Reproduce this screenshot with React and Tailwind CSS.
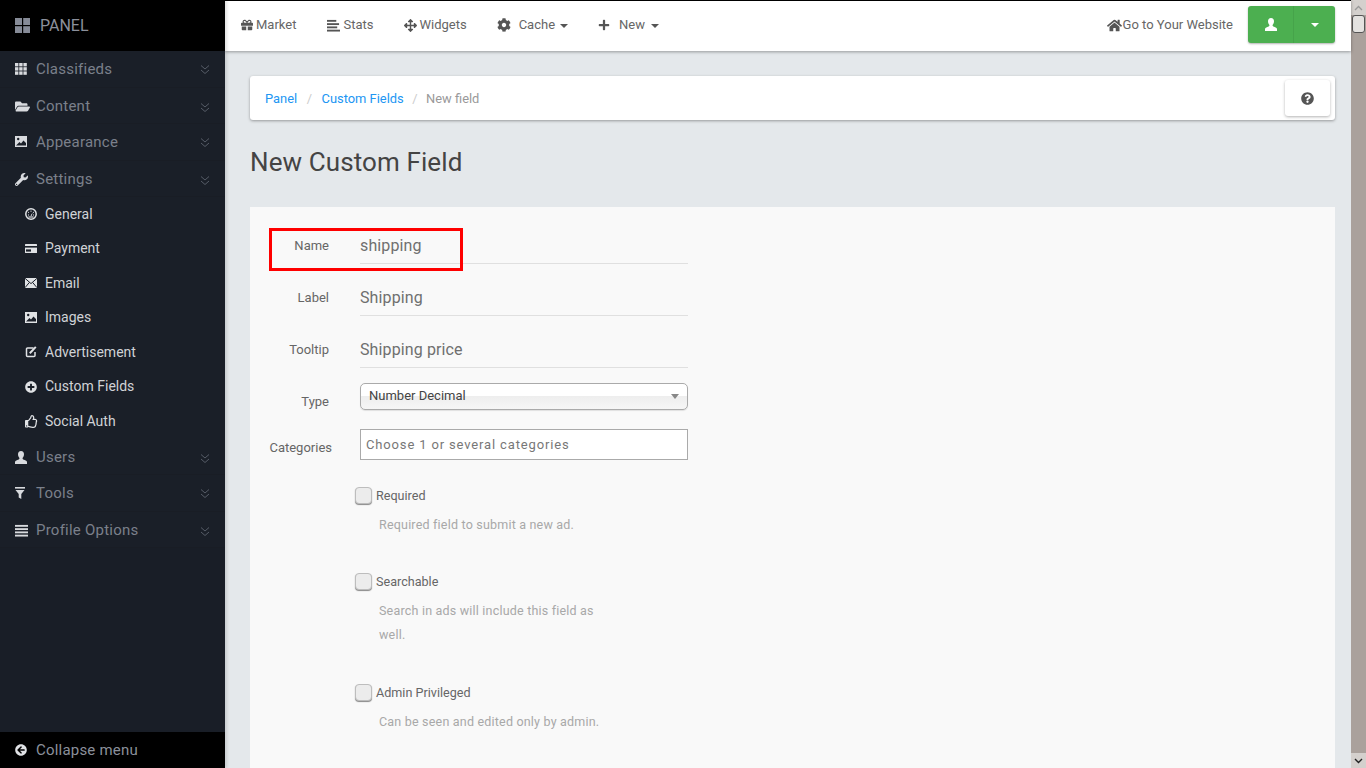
import React from "react";
import {
  FaFolderOpen, FaWrench, FaPlusCircle, FaRegThumbsUp, FaArrowCircleLeft, FaGift, FaArrowsAlt,
  FaCog, FaPlus, FaHome, FaQuestionCircle,
} from "react-icons/fa";

const Chevrons = () => (
  <svg width="10" height="11" viewBox="0 0 10 11" fill="none" stroke="#565c67" strokeWidth="1" className="shrink-0 mt-[2px]">
    <path d="M1 1.5 5 5l4-3.5M1 6l4 3.5L9 6" />
  </svg>
);

const Lines = ({ size = 14, color = "currentColor", left = false }) => (
  <svg width={size} height={size} viewBox="0 0 14 14" fill={color} className="shrink-0">
    <rect x="0" y="1" width={left ? 10 : 14} height="2" />
    <rect x="0" y="4.5" width={left ? 13 : 14} height="2" />
    <rect x="0" y="8" width={left ? 11 : 14} height="2" />
    <rect x="0" y="11.5" width="14" height="2" />
  </svg>
);

const ThIcon = () => (
  <svg width="12" height="12" viewBox="0 0 12 12" fill="currentColor">
    {[0, 4.2, 8.4].flatMap((x) => [0, 4.2, 8.4].map((y) => <rect key={`${x}-${y}`} x={x} y={y} width="3.4" height="3.4" />))}
  </svg>
);
const ThLarge = () => (
  <svg width="15" height="15" viewBox="0 0 15 15" fill="#868b97" className="mr-[10px]">
    <rect width="7" height="7" /><rect x="8.2" width="6.8" height="7" /><rect y="8.2" width="7" height="6.8" /><rect x="8.2" y="8.2" width="6.8" height="6.8" />
  </svg>
);
const ImageIcon = () => (
  <svg width="12" height="11" viewBox="0 0 12 11">
    <rect width="12" height="11" fill="currentColor" />
    <path d="M1 9.5 4.5 6l1.5 1.5L8.5 4.5 11 7v2.5z" fill="#1a1f28" />
    <circle cx="3.2" cy="3" r="1.2" fill="#1a1f28" />
  </svg>
);
const Gauge = () => (
  <svg width="12" height="12" viewBox="0 0 12 12">
    <circle cx="6" cy="6" r="5.2" fill="#1a1f28" stroke="currentColor" strokeWidth="1.5" />
    <path d="M6 2.6v1.2M3 4l.9.7M9 4l-.9.7M3 7h1M8 7h1" stroke="currentColor" strokeWidth="1" />
    <path d="M5.5 7.5 7.7 4.4 6.7 8z" fill="currentColor" />
    <path d="M3.5 9h5" stroke="currentColor" strokeWidth="1.2" />
  </svg>
);
const Card = () => (
  <svg width="12" height="9" viewBox="0 0 12 9">
    <rect width="12" height="9" rx="0.5" fill="currentColor" />
    <rect y="2" width="12" height="1.6" fill="#1a1f28" />
    <rect x="1" y="5.4" width="5" height="2.2" fill="#1a1f28" />
  </svg>
);
const Mail = () => (
  <svg width="12" height="10" viewBox="0 0 12 10">
    <rect width="12" height="10" fill="currentColor" />
    <path d="M0 .3 6 5.6 12 .3M0 9.700l4.300-5.200M12 9.700 7.700 4.500" fill="none" stroke="#1a1f28" strokeWidth="1" />
  </svg>
);
const Edit = () => (
  <svg width="12" height="12" viewBox="0 0 12 12" fill="none" stroke="currentColor">
    <path d="M8.5 2H2.5a1 1 0 0 0-1 1v6.500a1 1 0 0 0 1 1H9a1 1 0 0 0 1-1V6" strokeWidth="1.5" />
    <path d="M4.800 7.200 10.800.9" strokeWidth="2" />
  </svg>
);
const Person = () => (
  <svg width="12" height="13" viewBox="0 0 12 13" fill="currentColor">
    <path d="M6 0c2 0 3 1.400 3 3.300C9 5 8.200 6.300 7.600 7c-.2.700.2 1.300 1.400 1.800 1.600.6 3 1 3 2.400V13H0v-1.800c0-1.400 1.400-1.800 3-2.400C4.200 8.300 4.600 7.700 4.400 7 3.800 6.300 3 5 3 3.300 3 1.400 4 0 6 0z" />
  </svg>
);
const Filter = () => (
  <svg width="10" height="12" viewBox="0 0 10 12" fill="currentColor">
    <rect width="10" height="1.600" />
    <path d="M.5 3H9.500L6.300 7v5L3.700 10.500V7z" />
  </svg>
);

const Section = ({ icon, label, nudge = "" }) => (
  <div className={`flex items-center h-[36.5px] ${nudge} pl-[15px] pr-[15px] text-[#7b808b] text-[15px] tracking-[0.23px] border-b border-[#191d25]`}>
    <span className="w-[21px] shrink-0 text-[#d8dade] flex items-center">{icon}</span>
    <span className="flex-1">{label}</span>
    <Chevrons />
  </div>
);

const Sub = ({ icon, label }) => (
  <div className="flex items-center h-[34.5px] pl-[25px] text-[#d0d2d6] text-[14px]">
    <span className="w-[20px] shrink-0 text-[#e0e2e5] flex items-center">{icon}</span>
    <span>{label}</span>
  </div>
);

const Caret = ({ className = "border-t-[#555]" }) => (
  <span className={`w-0 h-0 border-x-[4px] border-x-transparent border-t-[4px] ${className}`} />
);

const NavItem = ({ icon, label, caret, gap = "gap-[3px]", className = "" }) => (
  <div className={`flex items-center ${gap} text-[13px] text-[#666] ${className}`}>
    <span className="text-[#555] flex items-center">{icon}</span>
    <span>{label}</span>
    {caret && <span className="-ml-[3px] mt-[1px] flex"><Caret /></span>}
  </div>
);

const Field = ({ label, value }) => (
  <div className="flex h-[52px]">
    <div className="w-[79px] text-right text-[13px] text-[#666] pt-[8px] leading-[20px]">{label}</div>
    <div className="ml-[31px] w-[328px] h-[36px] border-b border-[#e0e0e0] text-[16px] text-[#6f6f6f] leading-[20px] pt-[8px] tracking-[0.12px]">{value}</div>
  </div>
);

const Check = ({ label, hint, className = "" }) => (
  <div className={`flex flex-col ${className}`}>
    <div className="flex items-center ml-[105px] h-[17px]">
      <span className="w-[17px] h-[17px] rounded-[4px] border border-[#bdbdbd] bg-[#ececec] shadow-[0_1px_1px_rgba(0,0,0,0.45)]" />
      <span className="ml-[4px] pt-[2px] text-[12.6px] text-[#666]">{label}</span>
    </div>
    <p className="ml-[129px] mt-[9px] w-[226px] text-[12.5px] leading-[24px] text-[#a8a8a8] tracking-[0.2px]">{hint}</p>
  </div>
);

export default function App() {
  return (
    <div className="flex h-screen w-screen overflow-hidden font-['Roboto',sans-serif] bg-[#e4e8eb]">
      <aside className="w-[225px] shrink-0 h-full flex flex-col bg-[#1a1f28] shadow-[2px_0_3px_rgba(0,0,0,0.12)] z-10">
        <div className="h-[51px] bg-black flex items-center pl-[15px] text-[#8b909b] text-[16px] shrink-0">
          <ThLarge />
          <span>PANEL</span>
        </div>
        <Section icon={<ThIcon />} label="Classifieds" />
        <Section icon={<FaFolderOpen size={15} />} label="Content" nudge="pt-[2px]" />
        <Section icon={<ImageIcon />} label="Appearance" />
        <Section icon={<FaWrench size={13} />} label="Settings" nudge="pt-[2px]" />
        <Sub icon={<Gauge />} label="General" />
        <Sub icon={<Card />} label="Payment" />
        <Sub icon={<Mail />} label="Email" />
        <Sub icon={<ImageIcon />} label="Images" />
        <Sub icon={<Edit />} label="Advertisement" />
        <Sub icon={<FaPlusCircle size={12} />} label="Custom Fields" />
        <Sub icon={<FaRegThumbsUp size={13} />} label="Social Auth" />
        <Section icon={<Person />} label="Users" nudge="pt-[2px]" />
        <Section icon={<Filter />} label="Tools" />
        <Section icon={<Lines size={13} />} label="Profile Options" nudge="pt-[2px]" />
        <div className="flex-1 bg-[#191e27]" />
        <div className="h-[36px] bg-black flex items-center pl-[15px] text-[#8b909b] text-[15px] tracking-[0.2px] shrink-0">
          <FaArrowCircleLeft size={12} className="text-[#e0e2e5] mr-[9px]" />
          <span>Collapse menu</span>
        </div>
      </aside>

      <div className="flex-1 min-w-0 h-full flex flex-col">
        <header className="h-[51px] shrink-0 bg-white border-t border-black flex items-center pl-[16px] pr-[16px] pb-[2px] shadow-[0_1px_3px_rgba(0,0,0,0.35)] z-[5]">
          <NavItem icon={<FaGift size={12} />} label="Market" />
          <NavItem icon={<Lines size={13} left color="#555" />} label="Stats" gap="gap-[3px]" className="ml-[31px]" />
          <NavItem icon={<FaArrowsAlt size={13} />} label="Widgets" gap="gap-[2px]" className="ml-[31px]" />
          <NavItem icon={<FaCog size={14} />} label="Cache" gap="gap-[8px]" caret className="ml-[30px]" />
          <NavItem icon={<FaPlus size={12} />} label="New" gap="gap-[9px]" caret className="ml-[30px]" />
          <div className="flex-1" />
          <NavItem icon={<FaHome size={15} />} label="Go to Your Website" gap="gap-[1px]" />
          <div className="ml-[15px] -mt-[1px] w-[87px] h-[37px] flex rounded-[3px] bg-[#4caf50] shadow-[0_1px_2px_rgba(0,0,0,0.3)]">
            <div className="w-[46px] flex items-center justify-center border-r border-[#46a34a] text-white">
              <Person />
            </div>
            <div className="flex-1 flex items-center justify-center">
              <Caret className="border-t-white" />
            </div>
          </div>
        </header>

        <main className="flex-1 min-h-0 pl-[25px] pr-[16px] pt-[25px] overflow-hidden">
          <div className="h-[44px] bg-white rounded-[3px] shadow-[0_1px_3px_rgba(0,0,0,0.35)] flex items-center pl-[15px] pr-[5px] text-[12.9px]">
            <span className="text-[#2196f3] pt-[1px]">Panel</span>
            <span className="text-[#ccc] mx-[9.5px] pt-[1px]">/</span>
            <span className="text-[#2196f3] pt-[1px]">Custom Fields</span>
            <span className="text-[#ccc] mx-[8.5px] pt-[1px]">/</span>
            <span className="text-[#999] pt-[1px]">New field</span>
            <div className="flex-1" />
            <div className="w-[45px] h-[36px] rounded-[3px] bg-white shadow-[0_1px_3px_rgba(0,0,0,0.3)] flex items-center justify-center text-[#555]">
              <FaQuestionCircle size={13} />
            </div>
          </div>
          <h1 className="mt-[26px] text-[26px] leading-[32px] text-[#444] tracking-[0.1px]">New Custom Field</h1>

          <section className="relative mt-[29px] h-[600px] bg-[#f9f9f9] pt-[21px]">
            <div className="absolute left-[19px] top-[21px] w-[194px] h-[43px] border-[3px] border-[#ff0000]" />
            <Field label="Name" value="shipping" />
            <Field label="Label" value="Shipping" />
            <div className="h-[51px]"><Field label="Tooltip" value="Shipping price" /></div>
            <div className="flex h-[46px]">
              <div className="w-[79px] text-right text-[13px] text-[#666] pt-[9px] leading-[20px]">Type</div>
              <div className="ml-[31px] w-[328px] h-[27px] rounded-[5px] border border-[#aaa] bg-[linear-gradient(#fff_50%,#eee_50%,#f6f6f6)] shadow-[0_1px_1px_rgba(0,0,0,0.1)] flex items-center pl-[8px] pr-[8px] pb-[1px] text-[13px] text-[#444]">
                <span className="flex-1">Number Decimal</span>
                <span className="w-0 h-0 border-x-[4px] border-x-transparent border-t-[5px] border-t-[#888]" />
              </div>
            </div>
            <div className="flex h-[58px]">
              <div className="w-[82px] text-right text-[13px] text-[#666] pt-[9px] leading-[20px] whitespace-nowrap">Categories</div>
              <div className="ml-[28px] w-[328px] h-[31px] border border-[#aaa] bg-white flex items-center pl-[5px] text-[13px] text-[#777] tracking-[0.85px]">Choose 1 or several categories</div>
            </div>
            <Check label="Required" hint="Required field to submit a new ad." className="h-[86px]" />
            <Check label="Searchable" hint="Search in ads will include this field as well." className="h-[111px]" />
            <Check label="Admin Privileged" hint="Can be seen and edited only by admin." />
          </section>
        </main>
      </div>

      <div className="w-[15px] shrink-0 h-full flex flex-col bg-[#aaa19c]">
        <div className="h-[15px] bg-[#d4d0cd] flex items-center justify-center">
          <svg width="9" height="6" viewBox="0 0 9 6" fill="none" stroke="#999" strokeWidth="1.3"><path d="M1 5l3.500-3.500L8 5" /></svg>
        </div>
        <div className="w-[13px] h-[18px] ml-[1px] rounded-[3px] border border-[#555] bg-[#e4e2e0]" />
        <div className="flex-1" />
        <div className="h-[15px] bg-[#d4d0cd] flex items-center justify-center">
          <svg width="9" height="6" viewBox="0 0 9 6" fill="none" stroke="#222" strokeWidth="1.4"><path d="M1 1l3.500 3.500L8 1" /></svg>
        </div>
      </div>
    </div>
  );
}
